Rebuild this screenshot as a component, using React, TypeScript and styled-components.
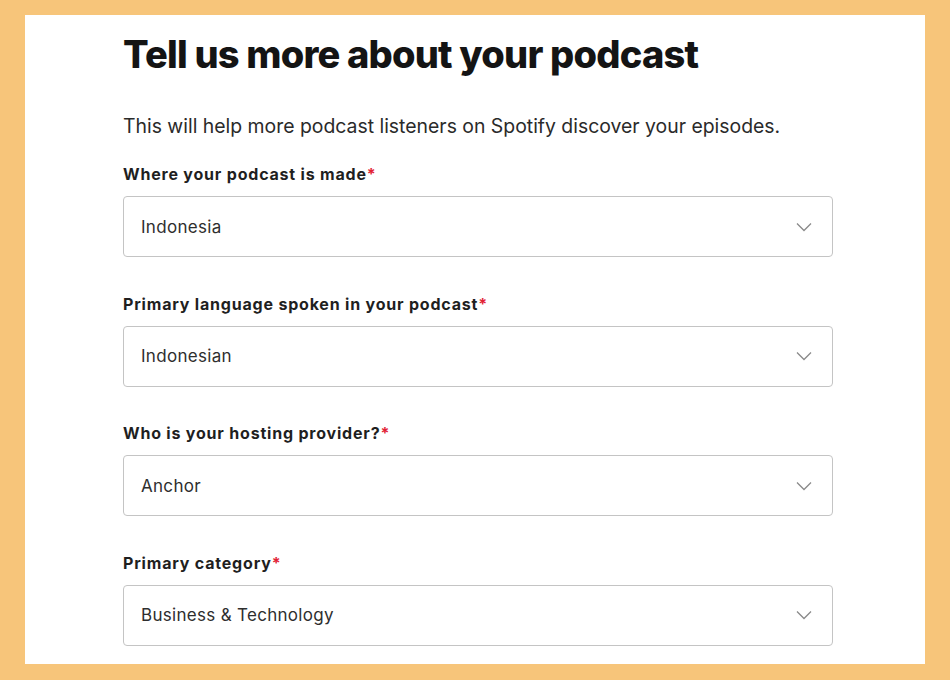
import React from "react";
import styled, { createGlobalStyle } from "styled-components";

const GlobalStyle = createGlobalStyle`
  html, body {
    margin: 0;
    padding: 0;
    background: #f7c57a;
  }
  body {
    font-family: Inter, "Noto Sans", sans-serif;
  }
`;

type Field = {
  label: string;
  value: string;
};

const fields: Field[] = [
  { label: "Where your podcast is made", value: "Indonesia" },
  { label: "Primary language spoken in your podcast", value: "Indonesian" },
  { label: "Who is your hosting provider?", value: "Anchor" },
  { label: "Primary category", value: "Business & Technology" },
];

const Chevron = () => (
  <svg width="16" height="10" viewBox="0 0 16 10" fill="none">
    <path d="M1 1.5L8 8.5L15 1.5" stroke="#8a8a8a" strokeWidth="1.3" />
  </svg>
);

const App = () => {
  return (
    <Frame>
      <GlobalStyle />
      <Panel>
        <Content>
          <Title>Tell us more about your podcast</Title>
          <Intro>
            This will help more podcast listeners on Spotify discover your
            episodes.
          </Intro>
          <Fields>
            {fields.map((field) => (
              <FieldGroup key={field.label}>
                <Label>
                  {field.label}
                  <Required>*</Required>
                </Label>
                <SelectBox>
                  <SelectValue>{field.value}</SelectValue>
                  <Chevron />
                </SelectBox>
              </FieldGroup>
            ))}
          </Fields>
        </Content>
      </Panel>
    </Frame>
  );
};

const Frame = styled.div`
  width: 950px;
  height: 680px;
  box-sizing: border-box;
  padding: 15px 25px 16px 25px;
  background: #f7c57a;
`;

const Panel = styled.div`
  height: 100%;
  background: #ffffff;
  overflow: hidden;
`;

const Content = styled.div`
  width: 710px;
  margin-left: 98px;
  padding-top: 16px;
`;

const Title = styled.h1`
  margin: 0;
  font-size: 38px;
  line-height: 46px;
  font-weight: 800;
  letter-spacing: -0.8px;
  color: #141414;
`;

const Intro = styled.p`
  margin: 36px 0 0 0;
  font-size: 19.4px;
  line-height: 26px;
  font-weight: 400;
  color: #2a2a2a;
`;

const Fields = styled.div`
  display: flex;
  flex-direction: column;
  gap: 36.5px;
  margin-top: 25px;
`;

const FieldGroup = styled.div`
  display: flex;
  flex-direction: column;
  gap: 12px;
`;

const Label = styled.div`
  font-size: 16px;
  line-height: 20px;
  font-weight: 700;
  letter-spacing: 0.8px;
  color: #1f1f1f;
`;

const Required = styled.span`
  color: #e22134;
`;

const SelectBox = styled.div`
  height: 61px;
  box-sizing: border-box;
  border: 1px solid #c4c4c4;
  border-radius: 4px;
  display: flex;
  align-items: center;
  justify-content: space-between;
  padding: 0 20px 0 17px;
`;

const SelectValue = styled.span`
  font-size: 17px;
  letter-spacing: 0.3px;
  color: #2e2e2e;
`;

export default App;
